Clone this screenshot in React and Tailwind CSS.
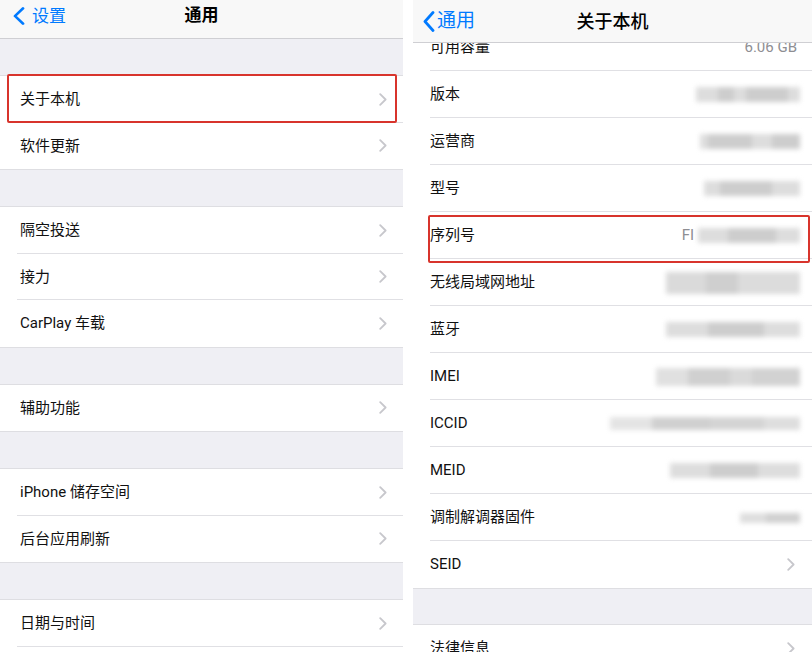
const Chevron = () => (
  <svg width="8" height="13" viewBox="0 0 8 13" fill="none">
    <path d="M1.2 1.2 6.6 6.5 1.2 11.8" stroke="#c7c7cc" strokeWidth="1.8" strokeLinecap="round" strokeLinejoin="round" />
  </svg>
);

const BackChevron = ({ h = 20 }) => (
  <svg width="12" height={h} viewBox="0 0 12 20" fill="none" preserveAspectRatio="none">
    <path d="M10 1.5 2 10l8 8.5" stroke="#007aff" strokeWidth="2.8" strokeLinecap="round" strokeLinejoin="round" />
  </svg>
);

// blurred value, like the censored numbers in the screenshot
function Blur({ parts }) {
  return (
    <div className="flex items-center blur-[2.5px]">
      {parts.map((p, i) => (
        <div key={i} className={p} />
      ))}
    </div>
  );
}

function Row({ label, last, inset = 'pl-[17px]', pad = 'pr-[16px]', h = 'h-[46.5px]', right, children }) {
  return (
    <div className={`relative bg-white ${h}`}>
      <div className={`flex h-full items-center justify-between ${inset} ${pad}`}>
        <span className="text-[15px] text-[#111]">{label}</span>
        {right}
      </div>
      {!last && <div className="absolute bottom-0 left-[17px] right-0 h-px bg-[#e0e0e4]" />}
      {children}
    </div>
  );
}

function Group({ children }) {
  return <div className="border-y border-[#dedee2] bg-white">{children}</div>;
}

function LeftPanel() {
  return (
    <div className="flex w-[403px] flex-col bg-[#efeff4]">
      <div className="relative flex h-[39px] shrink-0 items-center justify-center border-b border-[#cfcfd3] bg-[#f8f8f8] pb-[7px]">
        <div className="absolute left-[13px] top-[6px] flex items-center gap-[7px]">
          <BackChevron h={18} />
          <span className="text-[17px] leading-[20px] text-[#007aff]">设置</span>
        </div>
        <span className="text-[17px] font-semibold text-black">通用</span>
      </div>
      <div className="h-[36px] shrink-0" />
      <Group>
        <Row label="关于本机" inset="pl-[20px]" right={<Chevron />}>
          <div className="absolute -top-[2px] bottom-0 left-[7px] right-[6px] z-10 rounded-[2px] border-2 border-[#d8342c]" />
        </Row>
        <Row label="软件更新" inset="pl-[20px]" last right={<Chevron />} />
      </Group>
      <div className="h-[36px] shrink-0" />
      <Group>
        <Row label="隔空投送" inset="pl-[20px]" right={<Chevron />} />
        <Row label="接力" inset="pl-[20px]" right={<Chevron />} />
        <Row label="CarPlay 车载" inset="pl-[20px]" last right={<Chevron />} />
      </Group>
      <div className="h-[36px] shrink-0" />
      <Group>
        <Row label="辅助功能" inset="pl-[20px]" last right={<Chevron />} />
      </Group>
      <div className="h-[36px] shrink-0" />
      <Group>
        <Row label="iPhone 储存空间" inset="pl-[20px]" right={<Chevron />} />
        <Row label="后台应用刷新" inset="pl-[20px]" last right={<Chevron />} />
      </Group>
      <div className="h-[36px] shrink-0" />
      <Group>
        <Row label="日期与时间" inset="pl-[20px]" right={<Chevron />} />
        <div className="h-[20px]" />
      </Group>
    </div>
  );
}

const g1 = 'h-[15px] bg-[#dddddd]';
const g2 = 'h-[15px] bg-[#cdcdcd]';

function RightPanel() {
  const rows = [
    { label: '版本', parts: [`${g1} w-[22px]`, `${g2} w-[16px]`, `${g1} w-[12px]`, `${g2} w-[42px]`, `${g1} w-[12px]`] },
    { label: '运营商', parts: [`${g1} w-[8px]`, `${g2} w-[44px]`, `${g1} w-[20px]`, `${g2} w-[28px]`] },
    { label: '型号', parts: [`${g1} w-[16px]`, `${g2} w-[52px]`, `${g1} w-[28px]`] },
    { label: '序列号', serial: true },
    { label: '无线局域网地址', parts: [`h-[22px] bg-[#dadada] w-[40px]`, `h-[22px] bg-[#cfcfcf] w-[32px]`, `h-[22px] bg-[#dcdcdc] w-[62px]`] },
    { label: '蓝牙', parts: [`${g1} w-[42px]`, `${g2} w-[56px]`, `${g1} w-[36px]`] },
    { label: 'IMEI', parts: [`h-[18px] bg-[#e0e0e0] w-[32px]`, `h-[18px] bg-[#d0d0d0] w-[42px]`, `h-[18px] bg-[#dadada] w-[22px]`, `h-[18px] bg-[#d2d2d2] w-[48px]`] },
    { label: 'ICCID', parts: [`h-[13px] bg-[#e4e4e4] w-[42px]`, `h-[13px] bg-[#d0d0d0] w-[58px]`, `h-[13px] bg-[#d4d4d4] w-[54px]`, `h-[13px] bg-[#dedede] w-[36px]`] },
    { label: 'MEID', parts: [`${g1} w-[40px]`, `${g2} w-[48px]`, `${g1} w-[42px]`] },
    { label: '调制解调器固件', parts: [`h-[10px] bg-[#dedede] w-[26px]`, `h-[10px] bg-[#d0d0d0] w-[34px]`] },
  ];
  return (
    <div className="flex w-[399px] flex-col bg-[#efeff4]">
      <div className="relative z-20 flex h-[43px] shrink-0 items-center justify-center border-b border-[#cfcfd3] bg-[#f8f8f8]">
        <div className="absolute left-[10px] top-[8px] flex items-center gap-[2px]">
          <BackChevron h={21} />
          <span className="text-[19px] leading-[26px] text-[#007aff]">通用</span>
        </div>
        <span className="text-[18px] font-medium text-black">关于本机</span>
      </div>
      <div className="flex-1 overflow-hidden">
        <div className="-mt-[19px]">
          <div className="bg-white">
            <Row label="可用容量" h="h-[47px]" pad="pr-[15px]" right={<span className="text-[15px] text-[#8e8e93]">6.06 GB</span>} />
            {rows.map((r) => (
              <Row
                key={r.label}
                label={r.label}
                h="h-[47px]"
                pad="pr-[12px]"
                right={
                  r.serial ? (
                    <div className="flex items-center gap-[4px]">
                      <span className="text-[15px] text-[#8e8e93]">FI</span>
                      <Blur parts={[`${g1} w-[30px]`, `${g2} w-[48px]`, `${g1} w-[24px]`]} />
                    </div>
                  ) : (
                    <Blur parts={r.parts} />
                  )
                }
              >
                {r.serial && (
                  <div className="absolute -bottom-[4px] left-[15px] right-[2px] top-[3px] z-10 rounded-[2px] border-2 border-[#d8342c]" />
                )}
              </Row>
            ))}
            <Row label="SEID" h="h-[47px]" pad="pr-[17px]" last right={<Chevron />} />
          </div>
          <div className="h-[36px] border-t border-[#dedee2]" />
          <div className="border-t border-[#dedee2] bg-white">
            <Row label="法律信息" h="h-[47px]" pad="pr-[17px]" right={<Chevron />} />
          </div>
        </div>
      </div>
    </div>
  );
}

export default function App() {
  return (
    <div className="flex h-[652px] w-[812px] overflow-hidden bg-white font-['Roboto','Noto_Sans_CJK_SC',sans-serif]">
      <LeftPanel />
      <div className="w-[10px] shrink-0" />
      <RightPanel />
    </div>
  );
}
